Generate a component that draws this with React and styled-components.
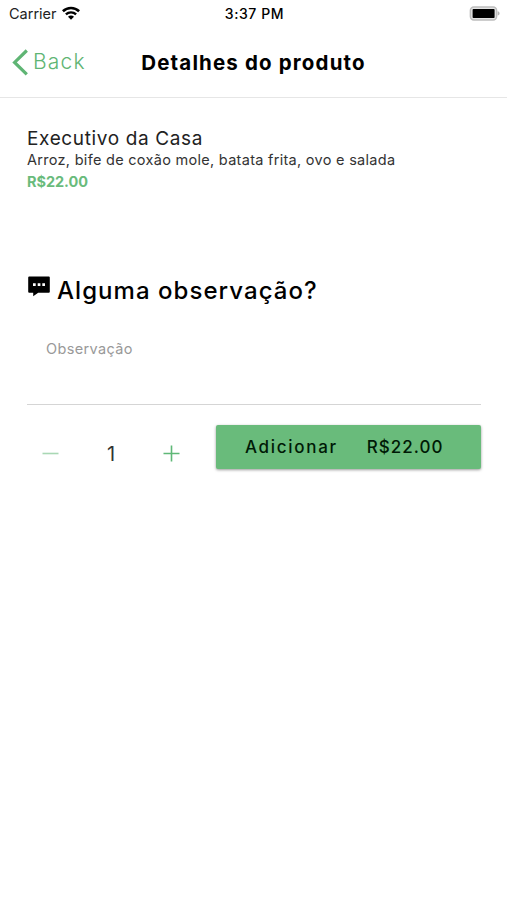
import React from 'react';
import styled, { createGlobalStyle } from 'styled-components';

const GlobalStyle = createGlobalStyle`
  * {
    box-sizing: border-box;
  }
  body {
    margin: 0;
    background: #fff;
    font-family: Inter, 'Open Sans', sans-serif;
    color: #000;
  }
  button, textarea {
    font-family: inherit;
    border: 0;
    background: transparent;
    padding: 0;
  }
`

function Wifi() {
  return (
    <svg width="18" height="14" viewBox="0 0 18 14" fill="none" stroke="#000">
      <path d="M0.9 5.2a11.8 11.8 0 0 1 16.2 0" strokeWidth="2.6" />
      <path d="M3.9 8.4a7.4 7.4 0 0 1 10.2 0" strokeWidth="2.4" />
      <path d="M9 13.8L6 10.8a4 4 0 0 1 6 0z" fill="#000" stroke="none" />
    </svg>
  )
}

function Battery() {
  return (
    <svg width="31" height="15" viewBox="0 0 31 15">
      <rect x="1.4" y="1" width="26.2" height="13" rx="3.4" fill="#e4e4e4" stroke="#bdbdbd" strokeWidth="1.5" />
      <rect x="3.6" y="3" width="22" height="9" rx="0.8" fill="#000" />
      <path d="M28.6 5.2c1.3.4 2 1.2 2 2.2s-.7 1.8-2 2.2z" fill="#b4b4b4" />
    </svg>
  )
}

function ChatIcon() {
  return (
    <svg width="22" height="21" viewBox="0 0 22 21">
      <path d="M1.2 0.5h19.6a1 1 0 0 1 1 1v14.2a1 1 0 0 1-1 1H10.2L5.2 20.2v-3.5h-4a1 1 0 0 1-1-1V1.5a1 1 0 0 1 1-1z" fill="#000" />
      <path d="M5 7.3h2.7v2.7H5zM9.7 7.3h2.7v2.7H9.7zM14.3 7.3h2.7v2.7h-2.7z" fill="#fff" />
    </svg>
  )
}

export default function App() {
  return (
    <>
      <GlobalStyle />
      <StatusBar>
        <Carrier>
          <span>Carrier</span>
          <Wifi />
        </Carrier>
        <Clock>3:37 PM</Clock>
        <Battery />
      </StatusBar>
      <Header>
        <BackButton>
          <svg width="17" height="27" viewBox="0 0 17 27" fill="none" stroke="#5fb574" strokeWidth="3.2">
            <path d="M14.8 1.5L2.6 13.4L14.8 25.3" />
          </svg>
          <span>Back</span>
        </BackButton>
        <Title>Detalhes do produto</Title>
      </Header>
      <Content>
        <Name>Executivo da Casa</Name>
        <Description>Arroz, bife de coxão mole, batata frita, ovo e salada</Description>
        <Price>R$22.00</Price>
        <Question>
          <ChatIcon />
          <h2>Alguma observação?</h2>
        </Question>
        <Note placeholder="Observação" />
        <Actions>
          <Stepper>
            <StepButton $faded>
              <svg width="17" height="17" viewBox="0 0 17 17" stroke="currentColor" strokeWidth="1.6">
                <path d="M0.5 8.5H16.5" />
              </svg>
            </StepButton>
            <Amount>1</Amount>
            <StepButton>
              <svg width="17" height="17" viewBox="0 0 17 17" stroke="currentColor" strokeWidth="1.6">
                <path d="M0.5 8.5H16.5M8.5 0.5V16.5" />
              </svg>
            </StepButton>
          </Stepper>
          <AddButton>
            <span>Adicionar</span>
            <Total>R$22.00</Total>
          </AddButton>
        </Actions>
      </Content>
    </>
  )
}

const StatusBar = styled.div`
  display: grid;
  grid-template-columns: 1fr auto 1fr;
  align-items: center;
  height: 27px;
  padding: 0 7px 0 9px;
  > svg {
    justify-self: end;
  }
`

const Carrier = styled.div`
  display: flex;
  align-items: center;
  gap: 5px;
  font-size: 14.5px;
  color: #222;
  svg {
    margin-top: -2px;
  }
`

const Clock = styled.div`
  font-size: 14px;
  font-weight: 500;
  letter-spacing: 0.6px;
`

const Header = styled.header`
  display: grid;
  grid-template-columns: 1fr auto 1fr;
  align-items: center;
  height: 71px;
  padding: 0 12px;
  border-bottom: 1px solid #e6e6e6;
`

const BackButton = styled.button`
  display: flex;
  align-items: center;
  gap: 4px;
  font-size: 21px;
  font-weight: 300;
  letter-spacing: 1.2px;
  color: #5fb574;
  span {
    margin-top: -1px;
  }
`

const Title = styled.h1`
  margin: 0;
  font-size: 20.5px;
  font-weight: 700;
  letter-spacing: 1.15px;
  white-space: nowrap;
`

const Content = styled.main`
  padding: 29px 26px 0 27px;
`

const Name = styled.div`
  font-size: 19px;
  line-height: 24px;
  letter-spacing: 0.63px;
  color: #222;
`

const Description = styled.div`
  font-size: 14.5px;
  line-height: 18px;
  letter-spacing: 0.29px;
  color: #333;
  white-space: nowrap;
`

const Price = styled.div`
  padding-top: 1px;
  font-size: 14.5px;
  font-weight: 700;
  line-height: 24px;
  letter-spacing: -0.05px;
  color: #69bb7b;
`

const Question = styled.div`
  display: flex;
  align-items: flex-start;
  gap: 7px;
  margin-top: 82px;
  svg {
    margin-left: 1px;
  }
  h2 {
    margin: 0;
    font-size: 24px;
    font-weight: 450;
    line-height: 30px;
    letter-spacing: 1.05px;
  }
`

const Note = styled.textarea`
  display: block;
  width: 100%;
  height: 86px;
  margin-top: 13px;
  padding: 20px 19px;
  border-bottom: 1px solid #d5d5d5;
  font-size: 14.5px;
  line-height: 20px;
  letter-spacing: 0.35px;
  resize: none;
  outline: none;
  &::placeholder {
    color: #999;
  }
`

const Actions = styled.div`
  display: flex;
  justify-content: space-between;
  padding-top: 20px;
`

const Stepper = styled.div`
  display: flex;
  align-items: center;
  justify-content: space-between;
  width: 138px;
  height: 57px;
  margin-left: 15px;
`

const StepButton = styled.button`
  display: flex;
  color: ${props => props.$faded ? '#a9d8b4' : '#5fb877'};
`

const Amount = styled.span`
  font-size: 20px;
  color: #333;
`

const AddButton = styled.button`
  display: flex;
  align-items: center;
  width: 265px;
  height: 44px;
  padding-left: 29px;
  border-radius: 2px;
  background: #69bb7b;
  box-shadow: 0 1px 3px rgba(0, 0, 0, 0.4);
  font-size: 17px;
  font-weight: 450;
  letter-spacing: 1.7px;
  color: #001a06;
`

const Total = styled.span`
  margin-left: 29px;
  letter-spacing: 1px;
`
